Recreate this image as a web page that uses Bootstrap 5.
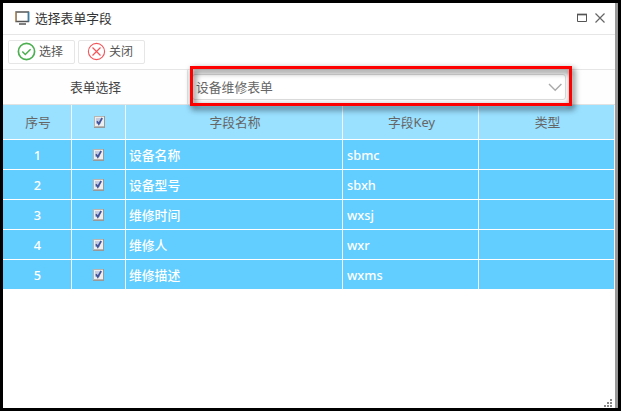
<!DOCTYPE html>
<html lang="zh-CN">
<head>
<meta charset="utf-8">
<meta name="viewport" content="width=device-width, initial-scale=1">
<title>选择表单字段</title>
<link href="https://cdn.jsdelivr.net/npm/bootstrap@5.3.0/dist/css/bootstrap.min.css" rel="stylesheet">
<style>
body{font:12.8px/20px "Noto Sans","Noto Sans CJK SC",sans-serif;background:#000;color:#555;width:621px;height:411px;padding:3px}
.dialog{width:615px;height:405px;background:#fff;border-right:3px solid #999}
.titlebar{height:32px;border-bottom:1px solid #e6e6e6;color:#333;padding:0 9px 2px 12px}
.caption-text{margin-left:5px}
.toolbar{height:35px;border-bottom:1px solid #e6e6e6;padding:0 5px}
.tool{width:67px;height:24px;border:1px solid #e6e6e6;border-radius:2px;background:#fff;font-size:12px;line-height:20px;color:#555;padding:0 0 0 8px;gap:3px}
.tool svg{margin-bottom:2px}
.tool+.tool{margin-left:3px}
.formrow{height:35px;border-bottom:1px solid #e2e2e2;background:#fefefe}
.formlabel{width:185px;color:#444;border-right:1px solid #e6e6e6;height:34px;padding:0 0 1px 1px}
.marker{position:absolute;left:187px;top:63px;width:382px;height:40px;border:3px solid #f00;filter:drop-shadow(2px 3px 3px rgba(0,0,0,.75));z-index:2;pointer-events:none}
.picker{width:374px;height:26px;margin-left:4px;border:1px solid #ddd;border-radius:3px;padding:0 2px 0 3px;background:#fff;color:#666}
.fields{table-layout:fixed;width:612px;border-collapse:separate;border-spacing:0}
.fields th,.fields td{height:30px;padding:0 3px 0 4px;border-right:1px solid #f1f7fa;border-bottom:1px solid #fff;background:#62cdff;color:#fff;font-weight:500;vertical-align:middle}
.fields th{height:35px;padding-left:5px;background:#9ae0ff;color:#666;font-weight:400;text-align:center}
.fields td:nth-child(-n+2){text-align:center}
.fields td:nth-child(3){padding-left:3px}
.tick{display:block;margin:0 auto;width:11px;height:12px}
.fields td:nth-child(2){padding:0 4px 0 3px}
.grip{height:9px;width:9px;margin:auto 2px 0 auto}
</style>
</head>
<body class="overflow-hidden">
<svg class="d-none"><symbol id="tick" viewBox="0 0 11 12"><path d="M0 0h11v12H0z" fill="#999"/><path d="M0 0h10v11H0z" fill="#b8b5b2"/><path d="M1 1h9v9H1z" fill="#eee"/><path d="M2 2h5v6H2z" fill="#c5cde0"/><path d="M3 5.2 4.8 8 8.2 2" fill="none" stroke="#40539c" stroke-width="1.7"/></symbol></svg>
<main class="dialog position-relative d-flex flex-column">
<header class="titlebar d-flex align-items-center">
<svg width="15" height="14" viewBox="0 0 15 14"><path d="M1 1h12.5v9.5H1z" fill="#fff" stroke="#555" stroke-width="1.4"/><path d="M.8 1v9.5" stroke="#d09a55"/><path d="M13.5 1v9.5" stroke="#377fa9" stroke-width="1.5"/><path d="M4 13h7" stroke="#555" stroke-width="1.5"/></svg>
<span class="caption-text flex-grow-1">选择表单字段</span>
<svg width="30" height="12" viewBox="0 0 30 12"><path d="M1.5 2.5h9v7h-9z" fill="none" stroke="#555"/><path d="M1 2.5h10" stroke="#555" stroke-width="1.7"/><path d="m19.5 1.5 9 9m0-9-9 9" stroke="#666" stroke-width="1.2"/></svg>
</header>
<div class="toolbar d-flex align-items-center">
<button class="tool d-flex align-items-center"><svg width="19" height="19" viewBox="0 0 19 19" fill="none" stroke="#4caf50"><circle cx="9.5" cy="9.5" r="8.1" stroke-width="1.7"/><path d="m5.3 9.5 3 3 5.3-5.3" stroke-width="1.5"/></svg>选择</button>
<button class="tool d-flex align-items-center"><svg width="19" height="19" viewBox="0 0 19 19" fill="none" stroke="#f2565b"><circle cx="9.5" cy="9.5" r="8.1" stroke-width="1.1"/><path d="m5.5 5.5 8 8m0-8-8 8" stroke-width="1.2"/></svg>关闭</button>
</div>
<div class="formrow d-flex align-items-center">
<div class="formlabel d-flex align-items-center justify-content-center">表单选择</div>
<div class="picker d-flex align-items-center justify-content-between"><span>设备维修表单</span><svg width="16" height="10" viewBox="0 0 16 10"><path d="m2 2 6.2 6.2L14.4 2" fill="none" stroke="#aaa" stroke-width="1.4"/></svg></div>
</div>
<div class="marker"></div>
<table class="fields">
<colgroup><col style="width:69px"><col style="width:54px"><col style="width:217px"><col style="width:136px"><col style="width:136px"></colgroup>
<thead><tr><th>序号</th><th><svg class="tick"><use href="#tick"/></svg></th><th>字段名称</th><th>字段Key</th><th>类型</th></tr></thead>
<tbody>
<tr><td>1</td><td><svg class="tick"><use href="#tick"/></svg></td><td>设备名称</td><td>sbmc</td><td></td></tr>
<tr><td>2</td><td><svg class="tick"><use href="#tick"/></svg></td><td>设备型号</td><td>sbxh</td><td></td></tr>
<tr><td>3</td><td><svg class="tick"><use href="#tick"/></svg></td><td>维修时间</td><td>wxsj</td><td></td></tr>
<tr><td>4</td><td><svg class="tick"><use href="#tick"/></svg></td><td>维修人</td><td>wxr</td><td></td></tr>
<tr><td>5</td><td><svg class="tick"><use href="#tick"/></svg></td><td>维修描述</td><td>wxms</td><td></td></tr>
</tbody>
</table>
<svg class="grip" viewBox="0 0 9 9" fill="#888"><path d="M6 0h2v2H6zM3 3h2v2H3zM6 3h2v2H6zM0 6h2v2H0zM3 6h2v2H3zM6 6h2v2H6z"/></svg>
</main>
<script src="https://cdn.jsdelivr.net/npm/bootstrap@5.3.0/dist/js/bootstrap.bundle.min.js"></script>
</body>
</html>
